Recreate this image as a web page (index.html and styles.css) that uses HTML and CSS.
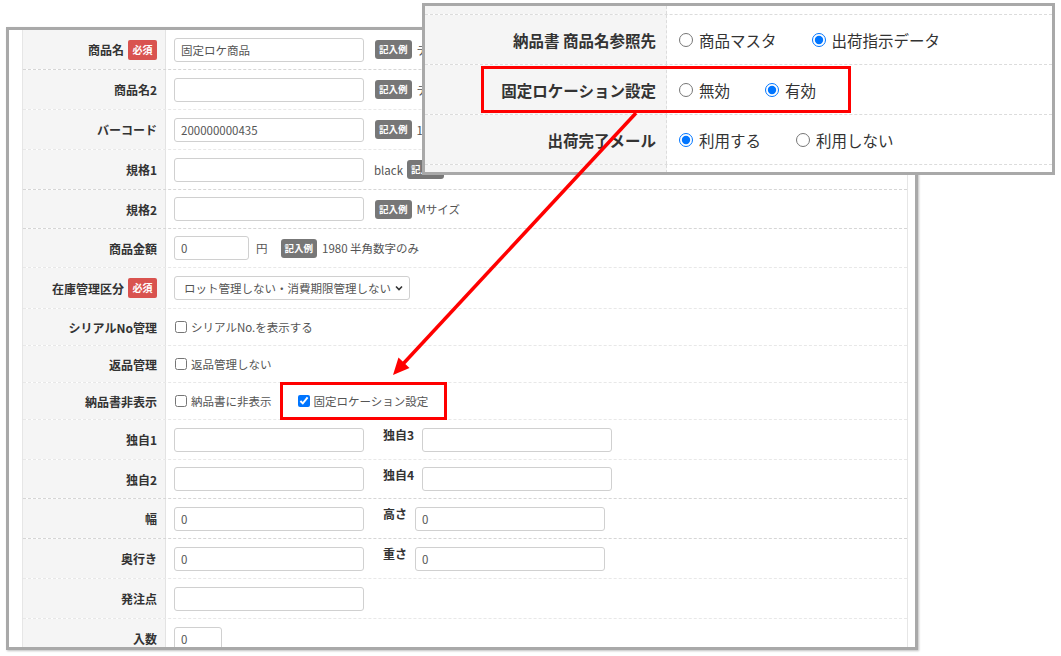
FILE: index.html
```html
<!DOCTYPE html>
<html lang="ja">
<head>
    <meta charset="UTF-8">
    <title>商品登録</title>
    <link rel="stylesheet" href="styles.css">
</head>
<body>
<div class="stage">
    <div class="window">
        <div class="form">
            <div class="row">
                <div class="label">商品名 <span class="req">必須</span></div>
                <div class="value">
                    <input type="text" class="field" value="固定ロケ商品">
                    <span class="ex">記入例</span><span class="hint">テスト商品</span>
                </div>
            </div>
            <div class="row dot">
                <div class="label">商品名2</div>
                <div class="value">
                    <input type="text" class="field">
                    <span class="ex">記入例</span><span class="hint">テスト商品2</span>
                </div>
            </div>
            <div class="row dot">
                <div class="label">バーコード</div>
                <div class="value">
                    <input type="text" class="field" value="200000000435">
                    <span class="ex">記入例</span><span class="hint">1234567890123</span>
                </div>
            </div>
            <div class="row">
                <div class="label">規格1</div>
                <div class="value">
                    <input type="text" class="field">
                    <span class="hint first">black</span><span class="ex near">記入例</span>
                </div>
            </div>
            <div class="row h39">
                <div class="label">規格2</div>
                <div class="value">
                    <input type="text" class="field">
                    <span class="ex">記入例</span><span class="hint">Mサイズ</span>
                </div>
            </div>
            <div class="row dot h39">
                <div class="label">商品金額</div>
                <div class="value">
                    <input type="text" class="field small" value="0">
                    <span class="unit">円</span>
                    <span class="ex wide">記入例</span><span class="hint">1980 半角数字のみ</span>
                </div>
            </div>
            <div class="row dot h41">
                <div class="label">在庫管理区分 <span class="req">必須</span></div>
                <div class="value">
                    <div class="select">
                        <span>ロット管理しない・消費期限管理しない</span>
                        <svg width="10" height="10" viewBox="0 0 10 10"><path d="M2 3.5 L5 6.5 L8 3.5" fill="none" stroke="#333" stroke-width="1.6"/></svg>
                    </div>
                </div>
            </div>
            <div class="row dot short">
                <div class="label">シリアルNo管理</div>
                <div class="value">
                    <label class="check"><input type="checkbox">シリアルNo.を表示する</label>
                </div>
            </div>
            <div class="row dot short">
                <div class="label">返品管理</div>
                <div class="value">
                    <label class="check"><input type="checkbox">返品管理しない</label>
                </div>
            </div>
            <div class="row dot short">
                <div class="label">納品書非表示</div>
                <div class="value">
                    <label class="check"><input type="checkbox">納品書に非表示</label>
                    <label class="check second"><input type="checkbox" checked>固定ロケーション設定</label>
                </div>
            </div>
            <div class="row dot">
                <div class="label">独自1</div>
                <div class="value">
                    <input type="text" class="field">
                    <span class="sub">独自3</span>
                    <input type="text" class="field">
                </div>
            </div>
            <div class="row h39">
                <div class="label">独自2</div>
                <div class="value">
                    <input type="text" class="field">
                    <span class="sub">独自4</span>
                    <input type="text" class="field">
                </div>
            </div>
            <div class="row">
                <div class="label">幅</div>
                <div class="value">
                    <input type="text" class="field" value="0">
                    <span class="sub">高さ</span>
                    <input type="text" class="field" value="0">
                </div>
            </div>
            <div class="row dot">
                <div class="label">奥行き</div>
                <div class="value">
                    <input type="text" class="field" value="0">
                    <span class="sub">重さ</span>
                    <input type="text" class="field" value="0">
                </div>
            </div>
            <div class="row dot">
                <div class="label">発注点</div>
                <div class="value">
                    <input type="text" class="field">
                </div>
            </div>
            <div class="row dot">
                <div class="label">入数</div>
                <div class="value">
                    <input type="text" class="field tiny" value="0">
                </div>
            </div>
        </div>
    </div>

    <div class="panel">
        <div class="prow stub">
            <div class="plabel"></div>
            <div class="pvalue"></div>
        </div>
        <div class="prow">
            <div class="plabel">納品書 商品名参照先</div>
            <div class="pvalue">
                <label class="opt"><input type="radio" name="ref">商品マスタ</label>
                <label class="opt"><input type="radio" name="ref" checked>出荷指示データ</label>
            </div>
        </div>
        <div class="prow">
            <div class="plabel">固定ロケーション設定</div>
            <div class="pvalue">
                <label class="opt"><input type="radio" name="fix">無効</label>
                <label class="opt"><input type="radio" name="fix" checked>有効</label>
            </div>
        </div>
        <div class="prow">
            <div class="plabel">出荷完了メール</div>
            <div class="pvalue">
                <label class="opt"><input type="radio" name="mail" checked>利用する</label>
                <label class="opt"><input type="radio" name="mail">利用しない</label>
            </div>
        </div>
        <div class="prow stub">
            <div class="plabel"></div>
            <div class="pvalue"></div>
        </div>
    </div>

    <!-- annotations -->
    <div class="mark mark-panel"></div>
    <div class="mark mark-form"></div>
    <svg class="arrow" width="1061" height="656" viewBox="0 0 1061 656">
        <line x1="636" y1="113" x2="403" y2="364" stroke="#ff0000" stroke-width="3.5"/>
        <polygon points="393,375 409.5,368 398.5,357.5" fill="#ff0000"/>
    </svg>
</div>
</body>
</html>
```

FILE: styles.css
```css
* {
    box-sizing: border-box;
}

body {
    margin: 0;
    background: #fff;
    font-family: "Noto Sans CJK JP", "Noto Sans", sans-serif;
    color: #333;
}

.stage {
    position: relative;
    width: 1061px;
    height: 656px;
    overflow: hidden;
    padding: 27px 0 0 6px;
}

/* main form window */
.window {
    width: 912px;
    height: 623px;
    border: 3px solid #a9a9a9;
    background: #fff;
    padding: 0 7px 0 13px;
    overflow: hidden;
    box-shadow: 1px 1px 2px rgba(0,0,0,0.25);
}

.form {
    height: 100%;
    border-left: 1px solid #e6e6e6;
    border-right: 1px solid #e6e6e6;
}

.row {
    display: flex;
    height: 40px;
    border-bottom: 1px dashed #d6d6d6;
}

.row.dot {
    border-bottom: 1px dashed #e8e8e8;
}

.row.h39 { height: 39px; }
.row.h41 { height: 41px; }
.row.short { height: 37px; }

.label {
    width: 143px;
    flex: none;
    display: flex;
    align-items: center;
    justify-content: flex-end;
    gap: 4px;
    padding-right: 8px;
    background: #f5f5f5;
    border-right: 1px solid #e3e3e3;
    font-size: 12px;
    font-weight: bold;
    color: #333;
}

.req {
    display: inline-block;
    width: 29px;
    height: 20px;
    line-height: 20px;
    text-align: center;
    background: #d9534f;
    color: #fff;
    font-size: 10px;
    font-weight: bold;
    border-radius: 2px;
}

.value {
    flex: 1;
    display: flex;
    align-items: center;
    padding-left: 8px;
    font-size: 11.5px;
    color: #555;
    white-space: nowrap;
}

.field {
    width: 190px;
    height: 24px;
    margin: 0;
    padding: 0 6px;
    border: 1px solid #d0d0d0;
    border-radius: 3px;
    font: inherit;
    color: #555;
    background: #fff;
}

.field.small { width: 75px; }
.field.tiny { width: 48px; }

.ex {
    margin-left: 11px;
    padding: 3px 4px;
    line-height: 13px;
    background: #777;
    color: #fff;
    font-size: 9.5px;
    font-weight: bold;
    border-radius: 3px;
}

.ex.near { margin-left: 4px; }
.ex.wide { margin-left: 13px; }

.hint {
    margin-left: 5px;
}

.hint.first { margin-left: 10px; }

.unit {
    margin-left: 7px;
}

.sub {
    align-self: flex-start;
    margin: 6px 8px 0 19px;
    font-size: 12px;
    font-weight: bold;
    color: #333;
}

.select {
    width: 236px;
    height: 24px;
    display: flex;
    align-items: center;
    justify-content: space-between;
    padding: 0 5px 0 9px;
    border: 1px solid #d0d0d0;
    border-radius: 3px;
    color: #555;
}

.check {
    display: flex;
    align-items: center;
}

.check input {
    width: 12px;
    height: 12px;
    margin: 0 4px 0 1px;
}

.check.second {
    margin-left: 25px;
}

/* zoomed settings panel */
.panel {
    position: absolute;
    left: 422px;
    top: 3px;
    width: 633px;
    height: 172px;
    border: 3px solid #a9a9a9;
    background: #fff;
    overflow: hidden;
    z-index: 2;
}

.prow {
    display: flex;
    height: 50px;
    border-bottom: 1px dashed #dcdcdc;
}

.prow.stub {
    height: 9px;
    flex: none;
}

.plabel {
    width: 242px;
    flex: none;
    display: flex;
    align-items: center;
    justify-content: flex-end;
    padding-right: 10px;
    background: #f5f5f5;
    border-right: 1px dashed #dcdcdc;
    font-size: 15.5px;
    font-weight: bold;
    color: #333;
}

.pvalue {
    flex: 1;
    display: flex;
    align-items: center;
    gap: 35px;
    padding-left: 12px;
    font-size: 15.5px;
    color: #333;
}

.opt {
    display: flex;
    align-items: center;
    gap: 6px;
}

.opt input {
    width: 14px;
    height: 14px;
    margin: 0;
}

/* red annotations */
.mark {
    position: absolute;
    border: 3px solid #ff0000;
    z-index: 3;
}

.mark-panel {
    left: 481px;
    top: 66px;
    width: 370px;
    height: 47px;
}

.mark-form {
    left: 280px;
    top: 382px;
    width: 167px;
    height: 38px;
}

.arrow {
    position: absolute;
    left: 0;
    top: 0;
    z-index: 4;
    pointer-events: none;
}
```
